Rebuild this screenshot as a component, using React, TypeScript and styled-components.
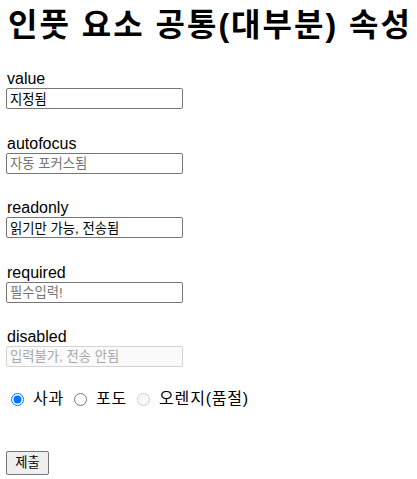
import React from 'react'
import styled, { createGlobalStyle } from 'styled-components'

const GlobalStyle = createGlobalStyle`
    body {
        margin: 0;
        background: #ffffff;
        color: #000000;
        font-family: 'Liberation Sans', 'Noto Sans CJK KR', sans-serif;
    }
`

const Page = styled.div`
    display: flex;
    flex-direction: column;
    padding: 0 6px;
`

const Title = styled.h1`
    margin: 0;
    padding: 5px 0 0 2px;
    font-size: 32px;
    font-weight: 700;
    line-height: 40px;
    letter-spacing: 2px;
    white-space: nowrap;
`

const Form = styled.form`
    display: flex;
    flex-direction: column;
    align-items: flex-start;
    margin-top: 24px;
`

const FieldList = styled.div`
    display: flex;
    flex-direction: column;
    gap: 24.6px;
`

const Field = styled.div`
    display: flex;
    flex-direction: column;
    align-items: flex-start;
`

const Label = styled.label`
    padding-left: 1px;
    font-size: 16px;
    line-height: 19px;
`

const TextInput = styled.input`
    box-sizing: border-box;
    width: 177px;
    height: 21px;
    margin: 0;
    padding: 1px 2px 1px 3px;
    border: 1px solid #767676;
    border-radius: 2px;
    background: #ffffff;
    color: #000000;
    font-family: 'Liberation Sans', 'Noto Sans CJK KR', sans-serif;
    font-size: 13.33px;
    line-height: 17px;
    outline: none;

    &::placeholder {
        color: #757575;
    }

    &:disabled {
        border-color: rgba(118, 118, 118, 0.3);
        background: rgba(239, 239, 239, 0.3);
    }

    &:disabled::placeholder {
        color: #a8a8a8;
    }
`

const RadioRow = styled.div`
    display: flex;
    align-items: center;
    gap: 5px;
    height: 20px;
    margin-top: 22px;
`

const RadioOption = styled.label`
    display: inline-flex;
    align-items: center;
    font-size: 16px;
    line-height: 20px;
    letter-spacing: 0.8px;
    color: #000000;
`

const Radio = styled.input`
    width: 13px;
    height: 13px;
    margin: 0 9px 0 5px;
`

const SubmitButton = styled.button`
    box-sizing: border-box;
    width: 43px;
    height: 24px;
    margin-top: 42px;
    padding: 1px 6px;
    border: 1px solid #767676;
    border-radius: 2px;
    background: #efefef;
    color: #000000;
    font-family: 'Liberation Sans', 'Noto Sans CJK KR', sans-serif;
    font-size: 13.33px;
    line-height: 18px;
`

const fields = [
    { name: 'value', props: { defaultValue: '지정됨' } },
    { name: 'autofocus', props: { placeholder: '자동 포커스됨' } },
    { name: 'readonly', props: { defaultValue: '읽기만 가능, 전송됨', readOnly: true } },
    { name: 'required', props: { placeholder: '필수입력!', required: true } },
    { name: 'disabled', props: { placeholder: '입력불가, 전송 안됨', disabled: true } },
]

const fruits = [
    { value: 'apple', label: '사과', checked: true },
    { value: 'grape', label: '포도' },
    { value: 'orange', label: '오렌지(품절)', disabled: true },
]

const App = () => {
    return (
        <Page>
            <GlobalStyle />
            <Title>인풋 요소 공통(대부분) 속성</Title>
            <Form onSubmit={(e) => e.preventDefault()}>
                <FieldList>
                    {fields.map((field) => (
                        <Field key={field.name}>
                            <Label htmlFor={field.name}>{field.name}</Label>
                            <TextInput id={field.name} name={field.name} type="text" {...field.props} />
                        </Field>
                    ))}
                </FieldList>
                <RadioRow>
                    {fruits.map((fruit) => (
                        <RadioOption key={fruit.value}>
                            <Radio
                                type="radio"
                                name="fruit"
                                value={fruit.value}
                                defaultChecked={fruit.checked}
                                disabled={fruit.disabled}
                            />
                            {fruit.label}
                        </RadioOption>
                    ))}
                </RadioRow>
                <SubmitButton type="submit">제출</SubmitButton>
            </Form>
        </Page>
    )
}

export default App
